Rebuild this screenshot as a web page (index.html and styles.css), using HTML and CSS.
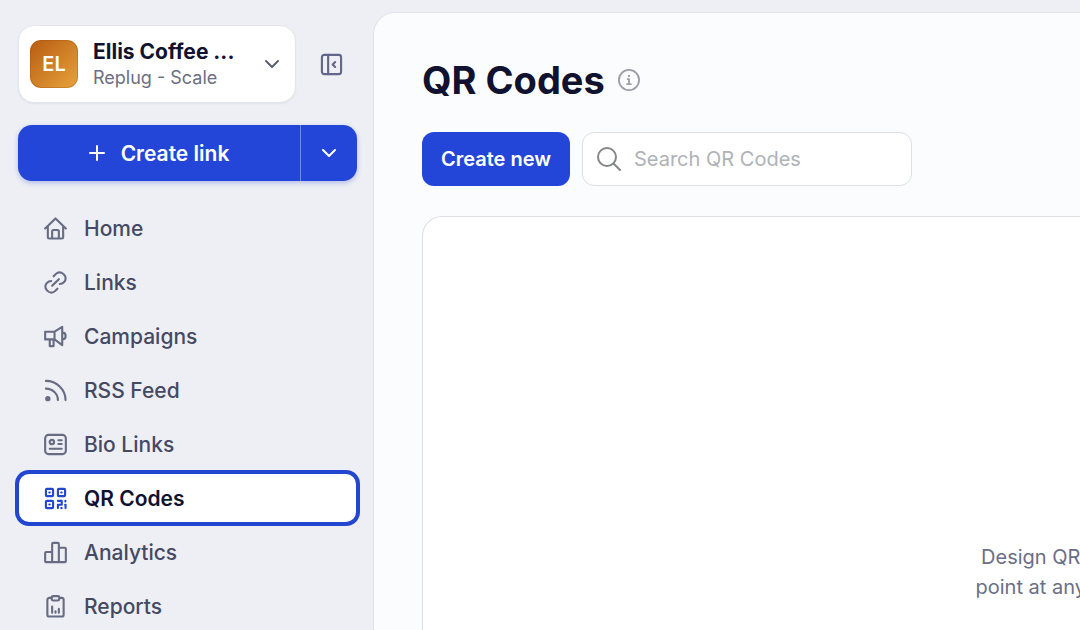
FILE: index.html
```html
<!DOCTYPE html>
<html lang="en">
<head>
    <meta charset="UTF-8">
    <meta name="viewport" content="width=device-width, initial-scale=1.0">
    <title>QR Codes - Replug</title>
    <link rel="stylesheet" href="styles.css">
</head>
<body>
    <aside class="sidebar">
        <div class="sidebar-top">
            <button type="button" class="workspace">
                <span class="avatar">EL</span>
                <span class="workspace-text">
                    <span class="workspace-name">Ellis Coffee ...</span>
                    <span class="workspace-plan">Replug - Scale</span>
                </span>
                <svg class="icon-chevron" viewBox="0 0 16 16"><path d="M2 5l6 6 6-6"/></svg>
            </button>
            <button type="button" class="collapse" aria-label="Collapse sidebar">
                <svg class="icon" viewBox="0 0 24 24"><rect x="2" y="2" width="20" height="20" rx="2.500"/><path d="M8.500 2v20M15.800 9.500 13.200 12l2.600 2.500"/></svg>
            </button>
        </div>

        <div class="create-link">
            <button type="button" class="create-main">
                <svg class="icon-plus" viewBox="0 0 16 16"><path d="M8 1v14M1 8h14"/></svg>
                Create link
            </button>
            <button type="button" class="create-more" aria-label="More options">
                <svg class="icon-chevron" viewBox="0 0 16 16"><path d="M2 5l6 6 6-6"/></svg>
            </button>
        </div>

        <nav class="menu">
            <a href="#" class="menu-item">
                <svg class="icon" viewBox="0 0 24 24"><path d="M1.200 12 12 1.500 22.800 12M4 10v11a1.500 1.500 0 0 0 1.500 1.500h13A1.500 1.500 0 0 0 20 21V10M8.500 22.500V15a1.500 1.500 0 0 1 1.500-1.500h4a1.500 1.500 0 0 1 1.500 1.500v7.500"/></svg>
                Home
            </a>
            <a href="#" class="menu-item">
                <svg class="icon" viewBox="0 0 24 24"><path d="M10 5.500 12.500 3a5.300 5.300 0 0 1 7.500 0l1 1a5.300 5.300 0 0 1 0 7.500c-1.200 1.200-2.500 2-4.500 2M14 18.500 11.500 21a5.300 5.300 0 0 1-7.500 0l-1-1a5.300 5.300 0 0 1 0-7.500c1.200-1.200 2.500-2 4.500-2M8.500 15.500l7-7"/></svg>
                Links
            </a>
            <a href="#" class="menu-item">
                <svg class="icon" viewBox="0 0 24 24"><path d="M1.200 7H11l8-5v19l-8-6H1.200zM11 7v8M6 15v7h4v-7M19 8c4.800 0 4.800 7 0 7"/></svg>
                Campaigns
            </a>
            <a href="#" class="menu-item">
                <svg class="icon" viewBox="0 0 24 24"><path d="M2 2C13 2 22.500 11 22.500 22M2 10c7 0 12.500 5.500 12.500 12"/><circle class="dot" cx="4" cy="20.500" r="2.800"/></svg>
                RSS Feed
            </a>
            <a href="#" class="menu-item">
                <svg class="icon" viewBox="0 0 24 24"><rect x="1.200" y="2" width="21.600" height="20" rx="3.500"/><circle cx="8.200" cy="9.500" r="2.300"/><path d="M15 7.500h3.500M15 11.500h3.500M6 16.500h12.500"/></svg>
                Bio Links
            </a>
            <a href="#" class="menu-item active">
                <svg class="icon" viewBox="0 0 24 24"><rect x="2" y="2" width="7.500" height="7.500" rx="1"/><rect x="14.500" y="2" width="7.500" height="7.500" rx="1"/><rect x="2" y="14.500" width="7.500" height="7.500" rx="1"/><path d="M5.500 5.750h.5M18 5.750h.5M5.500 18.250h.5M14.500 22v-3.500h4v-4h-4M22.300 14.500v.5M22.500 22v-3.500H22M18 22h.5"/></svg>
                QR Codes
            </a>
            <a href="#" class="menu-item">
                <svg class="icon" viewBox="0 0 24 24"><path d="M8.500 22V3a1 1 0 0 1 1-1h5a1 1 0 0 1 1 1v19M8.500 11.500H2.200a1 1 0 0 0-1 1V21a1 1 0 0 0 1 1h19.600a1 1 0 0 0 1-1V8a1 1 0 0 0-1-1h-6.300"/></svg>
                Analytics
            </a>
            <a href="#" class="menu-item">
                <svg class="icon" viewBox="0 0 24 24"><path d="M8 3H5.500A2 2 0 0 0 3.500 5v15.500a2 2 0 0 0 2 2h13a2 2 0 0 0 2-2V5a2 2 0 0 0-2-2H16M8.500 12v6.500M12 17v1.500M15.500 14.500v4"/><rect x="8" y="1.200" width="8" height="4.500" rx="1.500"/></svg>
                Reports
            </a>
        </nav>
    </aside>

    <main class="page">
        <div class="page-title">
            <h1>QR Codes</h1>
            <svg class="icon-info" viewBox="0 0 24 24"><circle cx="12" cy="12" r="11"/><path d="M10.500 11H12v5.500M10 16.500h4"/><circle class="dot" cx="12" cy="7.500" r="1.200"/></svg>
        </div>

        <div class="toolbar">
            <button type="button" class="create-new">Create new</button>
            <label class="search">
                <svg class="icon-search" viewBox="0 0 26 26"><circle cx="11" cy="11" r="9"/><path d="M17.500 17.500 24 24"/></svg>
                <input type="text" placeholder="Search QR Codes" aria-label="Search QR Codes">
            </label>
        </div>

        <section class="results">
            <p class="empty-text">Design QR<br>point at any</p>
        </section>
    </main>
</body>
</html>
```

FILE: styles.css
```css
* {
    box-sizing: border-box;
}
body {
    font-family: Inter, "Liberation Sans", sans-serif;
    margin: 0;
    display: flex;
    height: 100vh;
    overflow: hidden;
    background: #edeff4;
    color: #101230;
}
button, input {
    font-family: inherit;
    border: none;
    padding: 0;
    background: none;
}
button {
    cursor: pointer;
}
svg {
    flex: none;
    fill: none;
    stroke: currentColor;
    stroke-width: 2;
    stroke-linecap: round;
    stroke-linejoin: round;
}
.dot {
    fill: currentColor;
    stroke: none;
}
.icon {
    width: 23px;
    height: 23px;
    stroke-width: 2.2;
}
.icon-chevron,
.icon-plus {
    width: 16px;
    height: 16px;
}

/* Sidebar */
.sidebar {
    flex: none;
    width: 373px;
    padding: 25px 16px 0 18px;
}
.sidebar-top {
    display: flex;
    align-items: center;
    gap: 24px;
    margin-bottom: 22px;
}
.workspace {
    display: flex;
    align-items: center;
    width: 278px;
    height: 78px;
    padding: 0 15px 0 11px;
    border: 1px solid #e4e6ec;
    border-radius: 16px;
    background: #fff;
    color: #5c6070;
    text-align: left;
    box-shadow: 0 1px 2px rgba(16, 18, 48, 0.06);
}
.avatar {
    width: 48px;
    height: 48px;
    margin-right: 15px;
    border: 1px solid rgba(150, 80, 10, 0.3);
    border-radius: 11px;
    background: linear-gradient(135deg, #b85c12, #e8a33c) border-box;
    color: #fff;
    font-size: 20px;
    font-weight: 600;
    line-height: 46px;
    text-align: center;
}
.workspace-text {
    flex: 1;
    padding-top: 1px;
}
.workspace-name,
.workspace-plan {
    display: block;
    line-height: 26px;
    white-space: nowrap;
}
.workspace-name {
    color: #101230;
    font-size: 21px;
    font-weight: 700;
}
.workspace-plan {
    color: #6b6e85;
    font-size: 18px;
}
.collapse {
    display: flex;
    color: #62668a;
}
.create-link {
    display: flex;
    height: 56px;
    margin-bottom: 23px;
    border-radius: 14px;
    background: #2346d8;
    box-shadow: 0 2px 5px rgba(35, 70, 216, 0.3);
}
.create-link button {
    display: flex;
    align-items: center;
    justify-content: center;
    color: #fff;
}
.create-link .create-main {
    flex: 1;
    gap: 16px;
    font-size: 21px;
    font-weight: 600;
}
.create-link .create-more {
    width: 57px;
    border-left: 1px solid #7189e8;
}

/* Menu */
.menu {
    display: flex;
    flex-direction: column;
    gap: 6px;
}
.menu-item {
    display: flex;
    align-items: center;
    gap: 17px;
    height: 48px;
    margin: 0 1px;
    padding-left: 25px;
    border-radius: 10px;
    color: #454963;
    font-size: 21px;
    font-weight: 500;
    text-decoration: none;
}
.menu-item .icon {
    color: #686c83;
}
.menu-item.active {
    background: #fff;
    color: #101230;
    font-weight: 600;
    box-shadow: 0 0 0 4px #2346d0;
}
.menu-item.active .icon {
    color: #2346d0;
}

/* Page */
.page {
    flex: 1;
    display: flex;
    flex-direction: column;
    margin-top: 12px;
    padding: 43px 0 0 48px;
    border: 1px solid #e1e3ea;
    border-width: 1px 0 0 1px;
    border-radius: 22px 0 0 0;
    background: #fafcfe;
}
.page-title {
    display: flex;
    align-items: center;
    gap: 13px;
    margin-bottom: 28px;
}
h1 {
    margin: 0;
    font-size: 38px;
    font-weight: 700;
    line-height: 48px;
}
.icon-info {
    width: 22px;
    height: 22px;
    color: #9c9eaa;
}
.toolbar {
    display: flex;
    gap: 12px;
    margin-bottom: 30px;
}
.create-new {
    width: 148px;
    height: 54px;
    border-radius: 12px;
    background: #2346d8;
    color: #fff;
    font-size: 20px;
    font-weight: 600;
}
.search {
    display: flex;
    align-items: center;
    gap: 12px;
    width: 330px;
    height: 54px;
    padding: 0 13px;
    border: 1px solid #dddfe4;
    border-radius: 12px;
    background: #fff;
}
.icon-search {
    width: 26px;
    height: 26px;
    color: #84868a;
}
.search input {
    flex: 1;
    min-width: 0;
    color: #101230;
    font-size: 20px;
    outline: none;
}
.search input::placeholder {
    color: #b0b2b6;
}
/* the results card runs on past the right edge of the window */
.results {
    flex: 1;
    display: flex;
    align-items: flex-end;
    justify-content: flex-end;
    margin-right: -24px;
    padding: 0 17px 28px 0;
    border: 1px solid #dddfe4;
    border-bottom: none;
    border-radius: 20px 20px 0 0;
    background: #fff;
}
.empty-text {
    margin: 0;
    color: #6b6e85;
    font-size: 20px;
    line-height: 30px;
    text-align: center;
    white-space: nowrap;
}
```
